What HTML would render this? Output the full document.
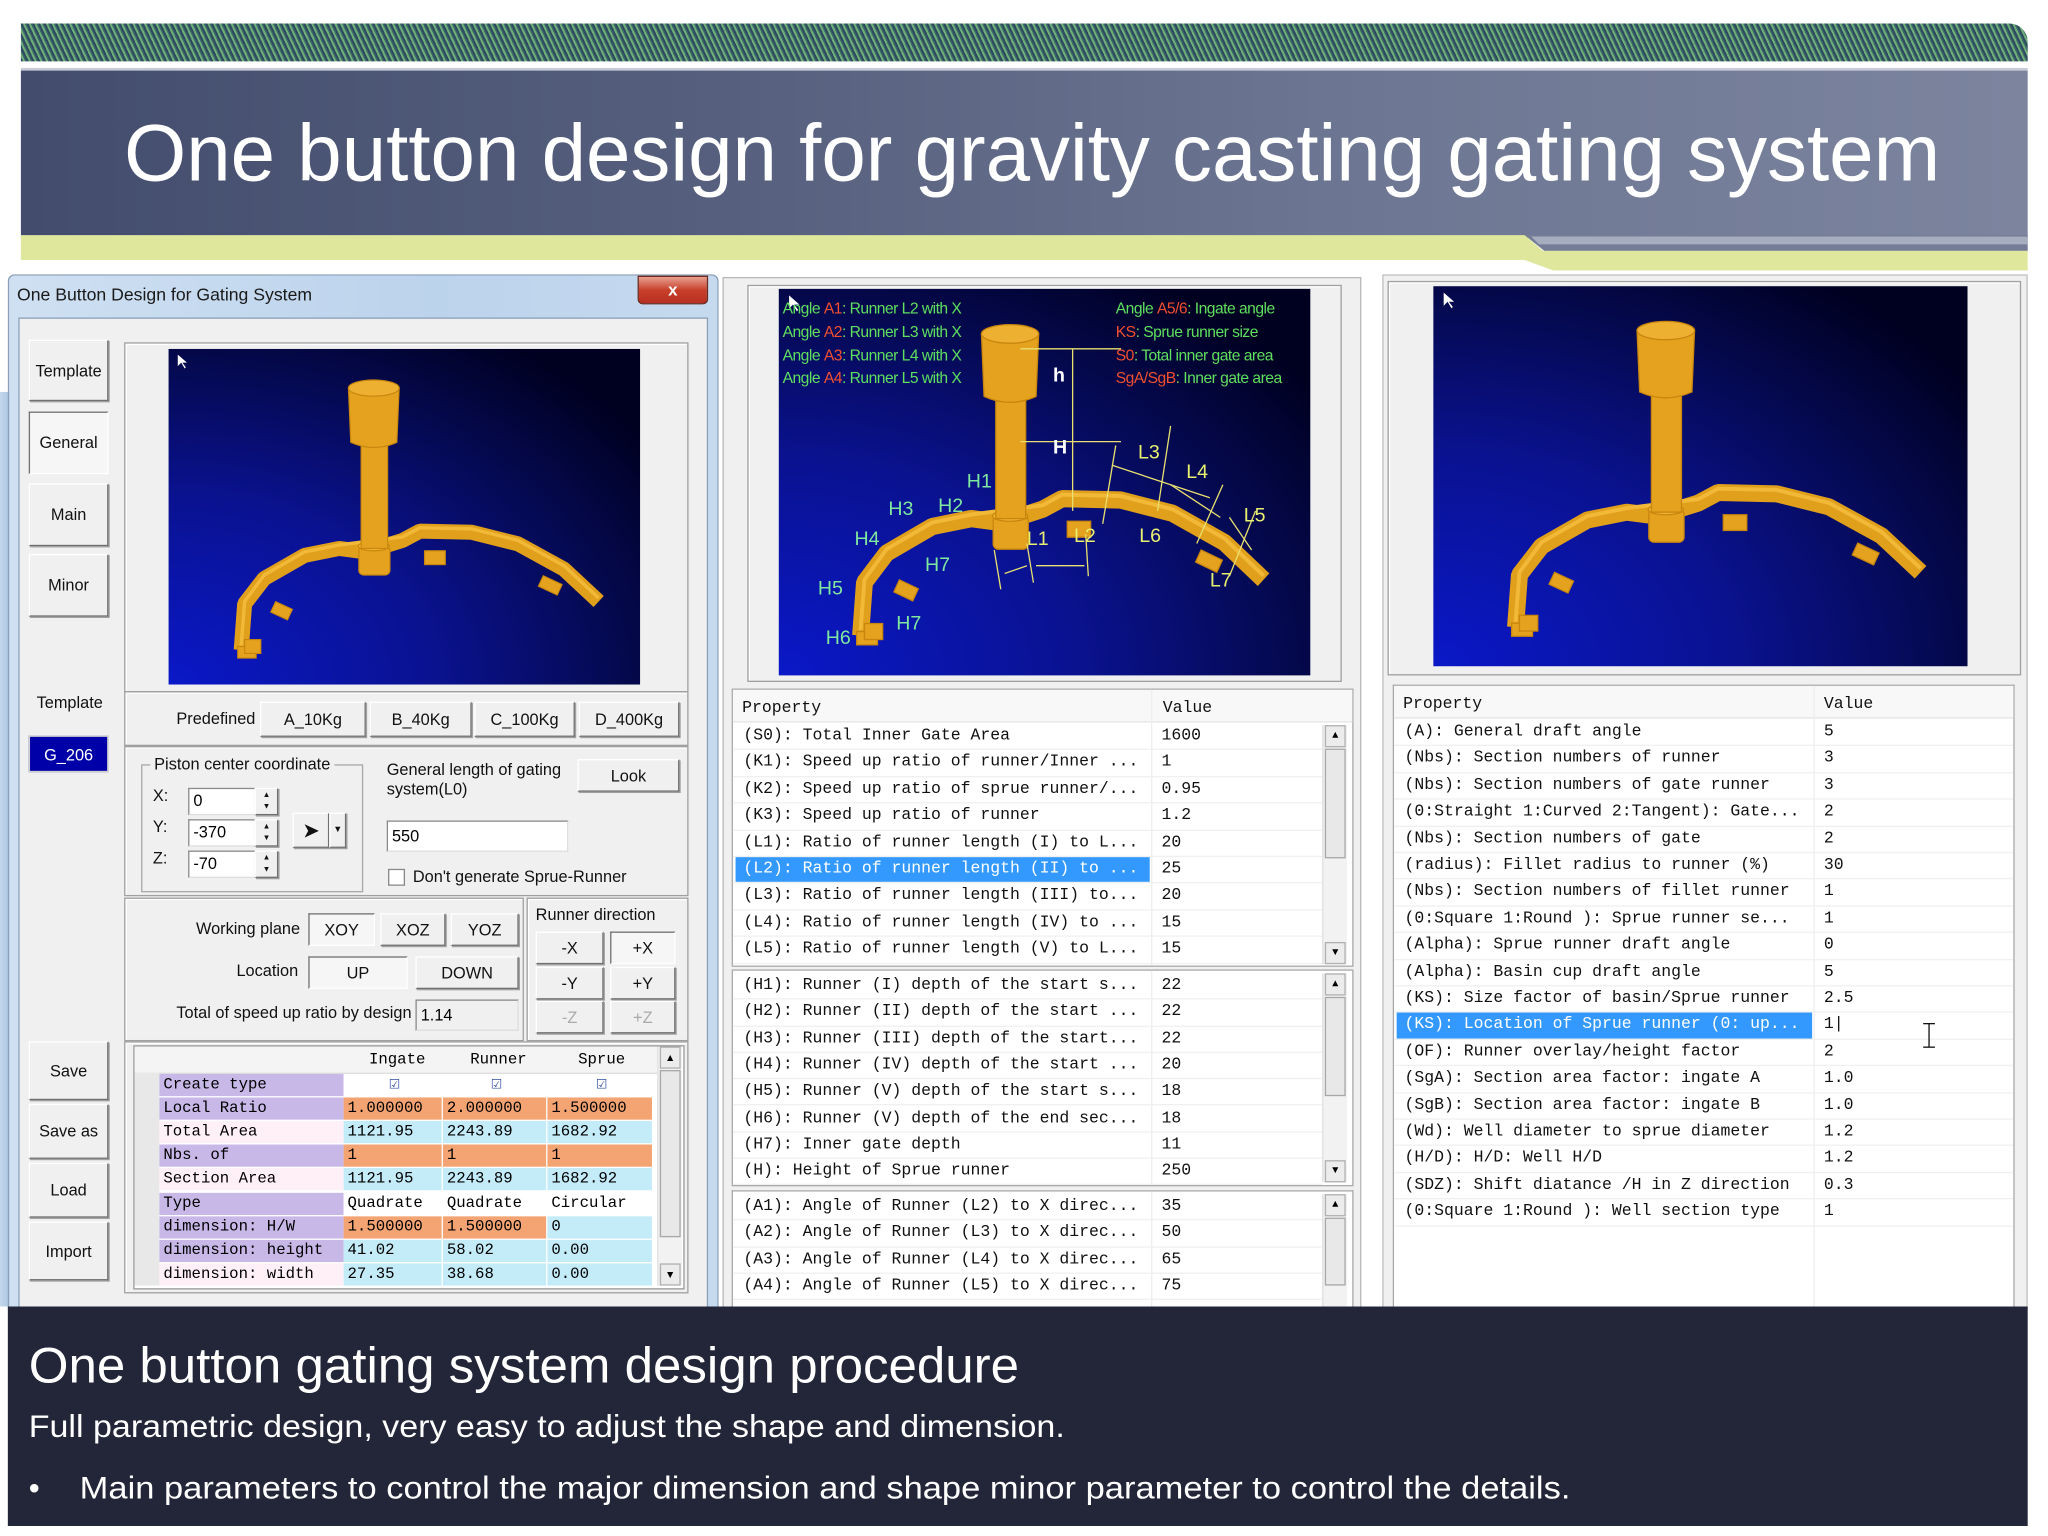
<!DOCTYPE html>
<html><head><meta charset="utf-8">
<style>
html,body{margin:0;padding:0;width:2048px;height:1536px;overflow:hidden;background:#fff}
#w{position:absolute;left:0;top:0;width:1560px;height:1170px;transform:scale(1.3065);transform-origin:0 0;font-family:"Liberation Sans",sans-serif;}
.a{position:absolute}
.btn{position:absolute;background:#f0f0f0;border:1px solid;border-color:#fff #707070 #707070 #fff;box-shadow:1px 1px 0 #a0a0a0;font-size:12.5px;color:#111;display:flex;align-items:center;justify-content:center;box-sizing:border-box}
.btn.dn{border-color:#707070 #fff #fff #707070;box-shadow:none;background:#f6f6f6}
.lbl{position:absolute;font-size:12.5px;color:#111;white-space:nowrap}
.inp{position:absolute;background:#fff;border:1px solid #8a8a8a;border-right-color:#ddd;border-bottom-color:#ddd;font-size:12.5px;box-sizing:border-box;padding-left:3px;line-height:18px}
.frame{position:absolute;border:1px solid #a0a0a0;box-shadow:inset 1px 1px 0 #fff}
.mono{font-family:"Liberation Mono",monospace;font-size:12.6px;color:#111}
.row{position:absolute;left:0;right:0;border-bottom:1px solid #f0f0f0;white-space:nowrap;overflow:hidden}
.row span{position:absolute}
.sb{position:absolute;width:18px;background:#f2f2f2;border-left:1px solid #e0e0e0}
.sb .th{position:absolute;left:1px;right:1px;background:#e8e8e8;border:1px solid #a8a8a8;box-sizing:border-box}
.sb .ar{position:absolute;left:1px;right:1px;height:17px;background:#ececec;border:1px solid #b0b0b0;box-sizing:border-box;font-size:8px;text-align:center;line-height:15px;color:#000}
.tc{position:absolute;font-family:"Liberation Mono",monospace;font-size:12px;height:17px;line-height:17px;box-sizing:border-box;padding-left:3px;white-space:nowrap;overflow:hidden}
</style></head><body><div id="w">

<div class="a" style="left:16px;top:18px;width:1536px;height:29px;border-radius:0 14px 0 0;background:repeating-linear-gradient(65deg,#2e4a60 0 1.5px,#6fae78 1.5px 3px,#3c6a68 3px 4px)"></div>
<div class="a" style="left:16px;top:52px;width:1536px;height:128px;background:linear-gradient(90deg,#434c6c 0%,#56607e 35%,#6c7692 65%,#7c849e 100%);border-top:2px solid #c8ccd8"></div>
<svg class="a" style="left:0;top:0" width="1560" height="215">
<text x="95" y="138" font-family="Liberation Sans" font-size="62" fill="#fff" textLength="1390" lengthAdjust="spacingAndGlyphs">One button design for gravity casting gating system</text>
<polygon points="16,180 1167,180 1189,199 16,199" fill="#dfe79c"/>
<polygon points="1167,180 1552,180 1552,192 1182,192" fill="#747c96"/>
<polygon points="1172,181 1552,181 1552,187 1178,187" fill="#a6adbf"/>
<polygon points="1167,192 1552,192 1552,207 1189,207 1167,199" fill="#dfe79c"/>
</svg>

<div class="a" style="left:0;top:300px;width:8px;height:700px;background:linear-gradient(90deg,#c4d8ec,#a8c4e0)"></div>

<div class="a" style="left:6px;top:210px;width:542px;height:790px;background:linear-gradient(90deg,#cfe0f2,#bcd3ec 60%,#c6daef);border:1px solid #8aa0ba;border-radius:5px 5px 0 0"></div>
<div class="lbl" style="left:13px;top:218px;font-size:13.5px;color:#1a1a1a">One Button Design for Gating System</div>
<div class="a" style="left:488px;top:211px;width:52px;height:20px;background:linear-gradient(#e8a090,#c8402a 50%,#b83020);border:1px solid #6a2a20;border-radius:0 0 4px 4px;color:#fff;font-size:13px;font-weight:bold;text-align:center;line-height:19px">x</div>
<div class="a" style="left:14px;top:243px;width:526px;height:757px;background:#f0f0f0;border:1px solid #8aa0ba"></div>

<div class="btn" style="left:22px;top:260px;width:61px;height:47px">Template</div>
<div class="btn dn" style="left:22px;top:315px;width:61px;height:48px">General</div>
<div class="btn" style="left:22px;top:370px;width:61px;height:48px">Main</div>
<div class="btn" style="left:22px;top:424px;width:61px;height:48px">Minor</div>
<div class="lbl" style="left:28px;top:531px">Template</div>
<div class="a" style="left:22px;top:563px;width:61px;height:28px;background:#0000a8;border:1px solid #d0d0d0;color:#fff;font-size:12.5px;text-align:center;line-height:28px;box-sizing:border-box">G_206</div>
<div class="btn" style="left:22px;top:797px;width:61px;height:45px">Save</div>
<div class="btn" style="left:22px;top:845px;width:61px;height:42px">Save as</div>
<div class="btn" style="left:22px;top:890px;width:61px;height:42px">Load</div>
<div class="btn" style="left:22px;top:935px;width:61px;height:45px">Import</div>

<div class="frame" style="left:95px;top:262px;width:430px;height:266px"></div>
<svg class="a" style="left:129px;top:267px" width="361" height="257" viewBox="0 0 409 291" preserveAspectRatio="none"><use href="#scene"/></svg>

<div class="frame" style="left:95px;top:529px;width:430px;height:40px"></div>
<div class="lbl" style="left:135px;top:543px">Predefined</div>
<div class="btn" style="left:199px;top:537px;width:81px;height:27px">A_10Kg</div>
<div class="btn" style="left:283px;top:537px;width:78px;height:27px">B_40Kg</div>
<div class="btn" style="left:363px;top:537px;width:77px;height:27px">C_100Kg</div>
<div class="btn" style="left:443px;top:537px;width:77px;height:27px">D_400Kg</div>

<div class="frame" style="left:95px;top:571px;width:430px;height:113px"></div>
<div class="a" style="left:108px;top:585px;width:168px;height:96px;border:1px solid #a8a8a8"></div>
<div class="lbl" style="left:115px;top:578px;background:#f0f0f0;padding:0 3px">Piston center coordinate</div>
<div class="lbl" style="left:117px;top:602px">X:</div>
<div class="lbl" style="left:117px;top:626px">Y:</div>
<div class="lbl" style="left:117px;top:650px">Z:</div>
<div class="inp" style="left:144px;top:603px;width:52px;height:21px">0</div>
<div class="inp" style="left:144px;top:627px;width:52px;height:21px">-370</div>
<div class="inp" style="left:144px;top:651px;width:52px;height:21px">-70</div>
<div class="btn" style="left:195px;top:603px;width:18px;height:21px;font-size:6px;flex-direction:column;line-height:9px">▲<br>▼</div>
<div class="btn" style="left:195px;top:627px;width:18px;height:21px;font-size:6px;flex-direction:column;line-height:9px">▲<br>▼</div>
<div class="btn" style="left:195px;top:651px;width:18px;height:21px;font-size:6px;flex-direction:column;line-height:9px">▲<br>▼</div>
<div class="btn" style="left:224px;top:622px;width:28px;height:27px;font-size:16px">➤</div>
<div class="btn" style="left:252px;top:622px;width:13px;height:27px;font-size:7px">▼</div>
<div class="lbl" style="left:296px;top:582px;line-height:15px;white-space:normal;width:140px">General length of gating system(L0)</div>
<div class="btn" style="left:442px;top:581px;width:78px;height:25px">Look</div>
<div class="inp" style="left:296px;top:628px;width:139px;height:24px;line-height:22px">550</div>
<div class="a" style="left:297px;top:665px;width:11px;height:11px;border:1px solid #888;background:#fff"></div>
<div class="lbl" style="left:316px;top:664px">Don't generate Sprue-Runner</div>

<div class="frame" style="left:95px;top:687px;width:304px;height:108px"></div>
<div class="frame" style="left:403px;top:687px;width:122px;height:108px"></div>
<div class="lbl" style="left:150px;top:704px">Working plane</div>
<div class="btn dn" style="left:236px;top:699px;width:51px;height:25px">XOY</div>
<div class="btn" style="left:291px;top:699px;width:50px;height:25px">XOZ</div>
<div class="btn" style="left:345px;top:699px;width:52px;height:25px">YOZ</div>
<div class="lbl" style="left:181px;top:736px">Location</div>
<div class="btn dn" style="left:236px;top:732px;width:76px;height:25px">UP</div>
<div class="btn" style="left:318px;top:732px;width:79px;height:25px">DOWN</div>
<div class="lbl" style="left:135px;top:768px">Total of speed up ratio by design</div>
<div class="inp" style="left:318px;top:765px;width:79px;height:24px;background:#f0f0f0;line-height:22px">1.14</div>
<div class="lbl" style="left:410px;top:693px">Runner direction</div>
<div class="btn" style="left:410px;top:713px;width:52px;height:25px">-X</div>
<div class="btn dn" style="left:467px;top:713px;width:50px;height:25px">+X</div>
<div class="btn" style="left:410px;top:740px;width:52px;height:25px">-Y</div>
<div class="btn" style="left:467px;top:740px;width:50px;height:25px">+Y</div>
<div class="btn" style="left:410px;top:766px;width:52px;height:25px;color:#aaa">-Z</div>
<div class="btn" style="left:467px;top:766px;width:50px;height:25px;color:#aaa">+Z</div>

<div class="frame" style="left:95px;top:797px;width:430px;height:191px"></div>
<div class="a" style="left:102px;top:800px;width:420px;height:185px;background:#fff;border:1px solid #999"></div>
<div class="a" style="left:103px;top:801px;width:400px;height:20px;background:#f4f4f4;border-bottom:1px solid #ddd"></div>
<div class="tc" style="left:265px;top:803px;width:75px;text-align:center">Ingate</div>
<div class="tc" style="left:340px;top:803px;width:80px;text-align:center">Runner</div>
<div class="tc" style="left:420px;top:803px;width:78px;text-align:center">Sprue</div>
<div class="a" style="left:103px;top:821px;width:19px;height:163px;background:#e8e8e8"></div>
<div id="ltab"></div>
<div class="sb" style="left:503px;top:801px;height:183px"><div class="ar" style="top:0">▲</div><div class="th" style="top:18px;height:128px"></div><div class="ar" style="bottom:0">▼</div></div>

<div class="a" style="left:553px;top:212px;width:487px;height:788px;background:#f0f0f0;border:1px solid #b8b8b8"></div>
<div class="frame" style="left:572px;top:218px;width:453px;height:302px"></div>
<svg class="a" style="left:596px;top:221px" width="407" height="296" viewBox="0 0 407 296">
<use href="#scene" transform="scale(0.995,1.017)"/>
<g font-family="Liberation Sans" font-size="12" fill="#5ee05e" style="letter-spacing:-0.4px">
<text x="3" y="19">Angle <tspan fill="#f05030">A1</tspan>: Runner L2 with X</text>
<text x="3" y="37">Angle <tspan fill="#f05030">A2</tspan>: Runner L3 with X</text>
<text x="3" y="55">Angle <tspan fill="#f05030">A3</tspan>: Runner L4 with X</text>
<text x="3" y="72">Angle <tspan fill="#f05030">A4</tspan>: Runner L5 with X</text>
<text x="258" y="19">Angle <tspan fill="#f05030">A5/6</tspan>: Ingate angle</text>
<text x="258" y="37"><tspan fill="#f05030">KS</tspan>:  Sprue runner size</text>
<text x="258" y="55"><tspan fill="#f05030">S0</tspan>:  Total inner gate area</text>
<text x="258" y="72"><tspan fill="#f05030">SgA/SgB</tspan>:  Inner gate area</text>
</g>
<g stroke="#e8e070" stroke-width="1" fill="none">
<line x1="185" y1="46" x2="262" y2="46"/><line x1="185" y1="117" x2="262" y2="117"/>
<line x1="225" y1="46" x2="225" y2="170"/>
<line x1="258" y1="120" x2="248" y2="180"/><line x1="300" y1="105" x2="290" y2="170"/>
<line x1="340" y1="150" x2="320" y2="195"/><line x1="365" y1="170" x2="345" y2="220"/>
<line x1="255" y1="135" x2="330" y2="160"/><line x1="300" y1="150" x2="338" y2="175"/>
<line x1="345" y1="175" x2="362" y2="200"/>
<line x1="165" y1="200" x2="170" y2="230"/><line x1="190" y1="195" x2="195" y2="225"/><line x1="235" y1="188" x2="237" y2="220"/>
<line x1="173" y1="218" x2="190" y2="212"/><line x1="197" y1="212" x2="234" y2="212"/>
</g>
<g font-family="Liberation Sans" font-size="15" fill="#7ee8a0">
<text x="210" y="71" fill="#fff" font-weight="bold">h</text>
<text x="210" y="126" fill="#fff" font-weight="bold">H</text>
<text x="144" y="152">H1</text><text x="122" y="171">H2</text><text x="84" y="173">H3</text>
<text x="58" y="196">H4</text><text x="112" y="216">H7</text><text x="30" y="234">H5</text>
<text x="90" y="261">H7</text><text x="36" y="272">H6</text>
</g>
<g font-family="Liberation Sans" font-size="15" fill="#e8f070">
<text x="275" y="130">L3</text><text x="312" y="145">L4</text><text x="356" y="178">L5</text>
<text x="190" y="196">L1</text><text x="226" y="194">L2</text><text x="276" y="194">L6</text><text x="330" y="228">L7</text>
</g>
</svg>

<div class="a mono" style="left:560px;top:527px;width:474px;height:211px;background:#fff;border:1px solid #a8a8a8">
<div class="a" style="left:0;top:0;width:474px;height:24px;background:#f8f8f8;border-bottom:1px solid #e4e4e4"></div>
<span class="a" style="left:7px;top:7px">Property</span><span class="a" style="left:329px;top:7px">Value</span>
<div class="a" style="left:320px;top:0;width:1px;height:211px;background:#eee"></div>
<div id="l1" class="a" style="left:0;top:26px;width:451px;height:185px"></div>
<div class="sb" style="left:451px;top:27px;height:183px"><div class="ar" style="top:0">▲</div><div class="th" style="top:18px;height:84px"></div><div class="ar" style="bottom:0">▼</div></div>
</div>
<div class="a mono" style="left:560px;top:742px;width:474px;height:164px;background:#fff;border:1px solid #a8a8a8">
<div class="a" style="left:320px;top:0;width:1px;height:164px;background:#eee"></div>
<div id="l2" class="a" style="left:0;top:2px;width:451px;height:162px"></div>
<div class="sb" style="left:451px;top:2px;height:160px"><div class="ar" style="top:0">▲</div><div class="th" style="top:18px;height:76px"></div><div class="ar" style="bottom:0">▼</div></div>
</div>
<div class="a mono" style="left:560px;top:911px;width:474px;height:89px;background:#fff;border:1px solid #a8a8a8;border-bottom:none">
<div class="a" style="left:320px;top:0;width:1px;height:89px;background:#eee"></div>
<div id="l3" class="a" style="left:0;top:2px;width:451px;height:87px"></div>
<div class="sb" style="left:451px;top:2px;height:87px"><div class="ar" style="top:0">▲</div><div class="th" style="top:18px;height:52px"></div></div>
</div>

<div class="a" style="left:1058px;top:210px;width:492px;height:790px;background:#f0f0f0;border:1px solid #c0c0c0"></div>
<div class="frame" style="left:1062px;top:215px;width:483px;height:300px"></div>
<svg class="a" style="left:1097px;top:219px" width="409" height="291" viewBox="0 0 409 291"><use href="#scene"/></svg>
<div class="a mono" style="left:1066px;top:524px;width:474px;height:476px;background:#fff;border:1px solid #a8a8a8;border-bottom:none">
<div class="a" style="left:0;top:0;width:474px;height:24px;background:#f8f8f8;border-bottom:1px solid #e4e4e4"></div>
<span class="a" style="left:7px;top:7px">Property</span><span class="a" style="left:329px;top:7px">Value</span>
<div class="a" style="left:321px;top:0;width:1px;height:476px;background:#eee"></div>
<div id="l4" class="a" style="left:0;top:26px;width:474px;height:400px"></div>
</div>
<div class="a" style="left:1476px;top:783px;width:1px;height:18px;background:#111"></div>
<div class="a" style="left:1472px;top:783px;width:9px;height:1px;background:#111"></div>
<div class="a" style="left:1472px;top:801px;width:9px;height:1px;background:#111"></div>

<div class="a" style="left:6px;top:1000px;width:1546px;height:168px;background:#222638"></div>
<svg class="a" style="left:0;top:1000px" width="1560" height="170">
<text x="22" y="58" font-family="Liberation Sans" font-size="38" fill="#fff" textLength="758" lengthAdjust="spacingAndGlyphs">One button gating system design procedure</text>
<text x="22" y="100" font-family="Liberation Sans" font-size="24" fill="#fff" textLength="793" lengthAdjust="spacingAndGlyphs">Full parametric design, very easy to adjust the shape and dimension.</text>
<text x="22" y="147" font-family="Liberation Sans" font-size="24" fill="#fff">•</text>
<text x="61" y="147" font-family="Liberation Sans" font-size="24" fill="#fff" textLength="1141" lengthAdjust="spacingAndGlyphs">Main parameters to control the major dimension and shape   minor parameter to control the details.</text>
</svg>

<svg width="0" height="0" style="position:absolute">
<defs>
<radialGradient id="bg" cx="0" cy="1" r="1.25">
<stop offset="0" stop-color="#0a18c8"/><stop offset="0.45" stop-color="#0a1290"/><stop offset="0.8" stop-color="#040848"/><stop offset="1" stop-color="#000020"/>
</radialGradient>
<g id="scene">
<rect width="409" height="291" fill="url(#bg)"/>
<path d="M8 5 l0 10 l3 -3 l3 5 l1 -1 l-3 -4 l4 0z" fill="#fff"/>
<g fill="#e4a21e" stroke="#c8860e" stroke-width="1">
<polyline points="63,261 66,221 83,199 118,179 148,173 171,176 203,166 218,158 263,159 303,169 343,191 373,219" fill="none" stroke="#e0a01c" stroke-width="13" stroke-linejoin="bevel"/>
<polyline points="63,257 66,219 83,196 118,176 148,170 203,163 218,155 263,156 303,166 343,188 373,216" fill="none" stroke="#f2b838" stroke-width="3"/>
<rect x="60" y="258" width="16" height="10"/><rect x="66" y="252" width="14" height="12"/>
<rect x="90" y="222" width="16" height="10" transform="rotate(25 98 227)"/>
<rect x="222" y="175" width="18" height="12"/>
<rect x="322" y="200" width="18" height="10" transform="rotate(25 331 205)"/>
<rect x="165" y="171" width="27" height="25" rx="4"/>
<ellipse cx="178" cy="171" rx="13.5" ry="4" fill="#f0b430"/>
<rect x="167" y="81" width="23" height="92"/>
<path d="M156 34 L200 34 L198 81 Q178 90 158 81 Z"/>
<ellipse cx="178" cy="34" rx="22" ry="7" fill="#eeb030"/>
</g>
</g>
</defs>
</svg>
</div>
<script>
function fill(id,rows,h,sel,vx){var e=document.getElementById(id),s='';rows.forEach(function(r,i){var bg=i===sel?'background:#3399ff;color:#fff;':'';s+='<div class="row" style="top:'+(i*h)+'px;height:'+(h-1)+'px;line-height:'+(h-1)+'px"><span style="left:2px;width:'+(vx-4)+'px;padding-left:6px;box-sizing:border-box;'+bg+'">'+r[0]+'</span><span style="left:'+(vx+7)+'px">'+r[1]+'</span></div>';});e.innerHTML=s;}
fill('l1',[["(S0): Total Inner Gate Area","1600"],["(K1): Speed up ratio of runner/Inner ...","1"],["(K2): Speed up ratio of sprue runner/...","0.95"],["(K3): Speed up ratio of runner","1.2"],["(L1): Ratio of runner length (I) to L...","20"],["(L2): Ratio of runner length (II) to ...","25"],["(L3): Ratio of runner length (III) to...","20"],["(L4): Ratio of runner length (IV) to ...","15"],["(L5): Ratio of runner length (V) to L...","15"]],20.4,5,321);
fill('l2',[["(H1): Runner (I) depth of the start s...","22"],["(H2): Runner (II) depth of the start ...","22"],["(H3): Runner (III) depth of the start...","22"],["(H4): Runner (IV) depth of the start ...","20"],["(H5): Runner (V) depth of the start s...","18"],["(H6): Runner (V) depth of the end sec...","18"],["(H7): Inner gate depth","11"],["(H): Height of Sprue runner","250"]],20.3,-1,321);
fill('l3',[["(A1): Angle of Runner (L2) to X direc...","35"],["(A2): Angle of Runner (L3) to X direc...","50"],["(A3): Angle of Runner (L4) to X direc...","65"],["(A4): Angle of Runner (L5) to X direc...","75"]],20.3,-1,321);
fill('l4',[["(A): General draft angle","5"],["(Nbs): Section numbers of runner","3"],["(Nbs): Section numbers of gate runner","3"],["(0:Straight 1:Curved 2:Tangent): Gate...","2"],["(Nbs): Section numbers of gate","2"],["(radius): Fillet radius to runner (%)","30"],["(Nbs): Section numbers of fillet runner","1"],["(0:Square  1:Round ): Sprue runner se...","1"],["(Alpha): Sprue runner draft angle","0"],["(Alpha): Basin cup draft angle","5"],["(KS): Size factor of basin/Sprue runner","2.5"],["(KS): Location of Sprue runner (0: up...","1|"],["(OF): Runner overlay/height factor","2"],["(SgA): Section area factor: ingate A","1.0"],["(SgB): Section area factor: ingate B","1.0"],["(Wd): Well diameter to sprue diameter","1.2"],["(H/D): H/D: Well H/D","1.2"],["(SDZ): Shift diatance /H in Z direction","0.3"],["(0:Square  1:Round ): Well section type","1"]],20.4,11,322);
var P='#c8b8e8',K='#fff0f8',O='#f4a472',B='#c4ecf8',W='#fff';
var T=[["Create type",P,[W,W,W],["☑","☑","☑"]],["Local Ratio",P,[O,O,O],["1.000000","2.000000","1.500000"]],["Total Area",K,[B,B,B],["1121.95","2243.89","1682.92"]],["Nbs. of",P,[O,O,O],["1","1","1"]],["Section Area",K,[B,B,B],["1121.95","2243.89","1682.92"]],["Type",P,[W,W,W],["Quadrate","Quadrate","Circular"]],["dimension: H/W",P,[O,O,B],["1.500000","1.500000","0"]],["dimension: height",P,[B,B,B],["41.02","58.02","0.00"]],["dimension: width",K,[B,B,B],["27.35","38.68","0.00"]]];
var s='',xs=[263,339,419],ws=[75,79,80];T.forEach(function(r,i){var y=822+i*18.1;s+='<div class="tc" style="left:122px;top:'+y+'px;width:141px;background:'+r[1]+'">'+r[0]+'</div>';for(var j=0;j<3;j++){var c=r[3][j]==='☑';s+='<div class="tc" style="left:'+xs[j]+'px;top:'+y+'px;width:'+ws[j]+'px;background:'+r[2][j]+';'+(c?'text-align:center;color:#3050a0;font-size:14px':'')+'">'+r[3][j]+'</div>';}});
document.getElementById('ltab').innerHTML=s;
</script>
</body></html>
